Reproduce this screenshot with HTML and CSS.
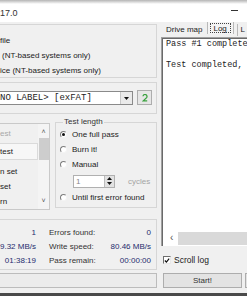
FILE: index.html
```html
<!DOCTYPE html>
<html>
<head>
    <title>Check Flash</title>
    <link rel="stylesheet" href="styles.css">
</head>
<body>
<div class="window">
    <div class="titlebar">
        <span class="title">17.0</span>
        <span class="minimize"></span>
    </div>
    <div class="main">
        <div class="left">
            <div class="group access">
                <div class="option">file</div>
                <div class="option shift">(NT-based systems only)</div>
                <div class="option">ice (NT-based systems only)</div>
            </div>
            <div class="group drive">
                <div class="combo">
                    <span class="combo-text">NO LABEL&gt; [exFAT]</span>
                    <span class="combo-btn">
                        <svg width="5" height="3" viewBox="0 0 5 3"><path d="M0 0H5L2.5 3Z" fill="#111"/></svg>
                    </span>
                </div>
                <div class="refresh">
                    <svg width="6" height="8" viewBox="0 0 6 8">
                        <path d="M1 2.3A2 2 0 1 1 4.6 3.6L1.2 6.9H5.2" fill="none" stroke="#3aa23f" stroke-width="1.3"/>
                    </svg>
                </div>
            </div>
            <div class="test-row">
                <div class="listbox">
                    <ul class="items">
                        <li class="disabled">est</li>
                        <li class="selected">test</li>
                        <li class="gap">n set</li>
                        <li>set</li>
                        <li>rn</li>
                    </ul>
                    <div class="vscroll">
                        <span class="arrow">&#708;</span>
                        <span class="thumb"></span>
                        <span class="arrow down">&#709;</span>
                    </div>
                </div>
                <div class="group length">
                    <span class="legend">Test length</span>
                    <div class="radio-line"><span class="radio on"></span>One full pass</div>
                    <div class="radio-line"><span class="radio"></span>Burn it!</div>
                    <div class="radio-line"><span class="radio"></span>Manual</div>
                    <div class="spin-line">
                        <div class="spin">
                            <span class="spin-value">1</span>
                            <span class="spin-btns">
                                <svg width="5" height="3" viewBox="0 0 5 3"><path d="M0 3H5L2.5 0Z" fill="#111"/></svg>
                                <svg width="5" height="3" viewBox="0 0 5 3"><path d="M0 0H5L2.5 3Z" fill="#111"/></svg>
                            </span>
                        </div>
                        <span class="cycles">cycles</span>
                    </div>
                    <div class="radio-line"><span class="radio"></span>Until first error found</div>
                </div>
            </div>
            <div class="group stats">
                <span class="val">1</span><span class="label">Errors found:</span><span class="val">0</span>
                <span class="val">9.32 MB/s</span><span class="label">Write speed:</span><span class="val">80.46 MB/s</span>
                <span class="val">01:38:19</span><span class="label">Pass remain:</span><span class="val">00:00:00</span>
            </div>
            <div class="progress"></div>
        </div>
        <div class="right">
            <div class="tabs">
                <span class="tab">Drive map</span>
                <span class="tab active"><span class="focus">Log</span></span>
                <span class="tab next">L</span>
            </div>
            <div class="log">
                <pre class="log-text">Pass #1 completed, no errors found.

Test completed, no errors found.</pre>
                <div class="hscroll">
                    <span class="arrow">&lsaquo;</span>
                    <span class="track"></span>
                </div>
            </div>
            <div class="check-line">
                <span class="checkbox">
                    <svg width="7" height="7" viewBox="0 0 7 7"><path d="M1 3.5L2.8 5.3L6 1.2" fill="none" stroke="#111" stroke-width="1.4"/></svg>
                </span>
                Scroll log
            </div>
            <div class="buttons">
                <div class="btn">Start!</div>
                <div class="btn"></div>
            </div>
        </div>
    </div>
    <div class="taskbar"></div>
</div>
</body>
</html>
```

FILE: styles.css
```css
* {
	box-sizing: border-box;
}

body {
	margin: 0;
	width: 247px;
	height: 296px;
	overflow: hidden;
	background-color: #f0f0f0;
	font-family: "Liberation Sans", Arial, sans-serif;
	font-size: 8px;
	color: #222;
}

.window {
	display: grid;
	grid-template-rows: 22px 270px 4px;
	height: 296px;
}

/* title bar */
.titlebar {
	display: flex;
	align-items: center;
	justify-content: space-between;
	padding: 4px 9px 0 0;
	background: linear-gradient(#b4b4b4, #fff 4px);
	font-size: 9px;
	color: #333;
}

.minimize {
	width: 7px;
	height: 1px;
	margin-bottom: 6px;
	background-color: #333;
}

.main {
	display: grid;
	grid-template-columns: 157px 120px;
	column-gap: 4px;
	overflow: hidden;
}

/* left side */
.left {
	display: flex;
	flex-direction: column;
}

.group {
	border: 1px solid #d6d6d6;
	border-left: none;
}

.access {
	margin-top: 2px;
	height: 54px;
	padding-top: 8px;
}

.option {
	line-height: 15px;
	white-space: nowrap;
}

.option.shift {
	padding-left: 2px;
}

.drive {
	margin-top: 4px;
	height: 32px;
	padding-top: 7px;
	display: flex;
	align-items: flex-start;
	gap: 4px;
}

.combo {
	margin-top: 1px;
	width: 133px;
	height: 14px;
	display: flex;
	justify-content: space-between;
	background-color: #fff;
	border: 1px solid #8a8a8a;
	border-left: none;
}

.combo-text {
	font-family: "Liberation Mono", "Courier New", monospace;
	font-size: 9px;
	line-height: 12px;
	white-space: nowrap;
}

.combo-btn {
	width: 12px;
	display: flex;
	align-items: center;
	justify-content: center;
	background-color: #eaeaea;
	border-left: 1px solid #c8c8c8;
}

.refresh {
	width: 15px;
	height: 15px;
	display: flex;
	align-items: center;
	justify-content: center;
	background-color: #e6e6e6;
	border: 1px solid #adadad;
}

.test-row {
	margin-top: 6px;
	height: 90px;
	display: flex;
	gap: 5px;
}

.listbox {
	margin-top: 3px;
	width: 50px;
	height: 87px;
	display: flex;
	border: 1px solid #c9c9c9;
	border-left: none;
}

.items {
	list-style: none;
	margin: 0;
	padding: 1px 0 0 0;
	flex: 1;
	overflow: hidden;
}

.items li {
	height: 15px;
	line-height: 15px;
	white-space: nowrap;
}

.items li.disabled {
	height: 18px;
	line-height: 17px;
	color: #a8a8a8;
}

.items li.selected {
	height: 17px;
	background-color: #f7f7f7;
	border: 1px solid #dadada;
	border-left: none;
	line-height: 15px;
}

.items li.gap {
	margin-top: 4px;
}

.vscroll {
	width: 11px;
	display: flex;
	flex-direction: column;
	align-items: center;
	background-color: #f4f4f4;
}

.vscroll .arrow {
	height: 14px;
	line-height: 16px;
	font-size: 7px;
	color: #555;
}

.vscroll .thumb {
	width: 10px;
	height: 22px;
	background-color: #cdcdcd;
}

.vscroll .down {
	margin-top: auto;
	line-height: 12px;
}

.length {
	margin-top: 2px;
	width: 102px;
	height: 86px;
	border-left: 1px solid #d6d6d6;
	padding: 0 0 0 4px;
}

.legend {
	display: table;
	margin: -6px 0 0 3px;
	padding: 0 1px;
	line-height: 10px;
	background-color: #f0f0f0;
	color: #333;
}

.radio-line {
	display: flex;
	align-items: center;
	gap: 5px;
	height: 15px;
	white-space: nowrap;
}

.radio {
	width: 7px;
	height: 7px;
	border-radius: 50%;
	background-color: #fff;
	border: 1px solid;
	border-color: #7d7d7d #f4f4f4 #f4f4f4 #7d7d7d;
	display: flex;
	align-items: center;
	justify-content: center;
}

.radio.on::after {
	content: "";
	width: 3px;
	height: 3px;
	border-radius: 50%;
	background-color: #111;
}

.spin-line {
	display: flex;
	align-items: center;
	height: 18px;
	padding-left: 13px;
	gap: 13px;
}

.spin {
	width: 42px;
	height: 13px;
	display: flex;
	justify-content: space-between;
	background-color: #fff;
	border: 1px solid #b0b0b0;
}

.spin-value {
	padding-left: 2px;
	line-height: 11px;
	color: #888;
}

.spin-btns {
	width: 10px;
	display: flex;
	flex-direction: column;
	align-items: center;
	justify-content: space-around;
	background-color: #e2e2e2;
	border-left: 1px solid #bdbdbd;
}

.spin-btns svg {
	display: block;
}

.cycles {
	color: #a4a4a4;
}

.stats {
	margin-top: 9px;
	height: 51px;
	padding: 5px 5px 0 0;
	display: grid;
	grid-template-columns: 36px 1fr auto;
	grid-auto-rows: 14px;
	align-items: center;
}

.stats .label {
	padding-left: 13px;
	color: #333;
}

.stats .val {
	text-align: right;
	color: #1f2c6e;
	white-space: nowrap;
}

.progress {
	margin-top: 3px;
	height: 15px;
	background-color: #ececec;
	border: 1px solid #bcbcbc;
	border-left: none;
}

/* right side */
.right {
	display: flex;
	flex-direction: column;
}

.tabs {
	height: 15px;
	display: flex;
	align-items: flex-start;
	padding-left: 5px;
}

.tab {
	line-height: 12px;
	margin-top: 2px;
	white-space: nowrap;
	flex-shrink: 0;
}

.tab.active {
	margin: -1px 0 0 5px;
	width: 27px;
	height: 13px;
	padding: 1px 2px;
	border: 1px solid #b8b8b8;
	border-bottom: none;
	background-color: #f4f4f4;
}

.focus {
	display: block;
	height: 10px;
	line-height: 9px;
	padding-left: 2px;
	border: 1px dotted #444;
}

.tab.next {
	margin-left: 3px;
	padding-left: 2px;
	border-left: 1px solid #b8b8b8;
}

.log {
	height: 209px;
	display: flex;
	flex-direction: column;
	background-color: #fff;
	border-top: 1px solid #a0a0a0;
	border-left: 1px solid #a0a0a0;
	box-shadow: inset 1px 1px 0 #6a6a6a;
}

.log-text {
	flex: 1;
	margin: 0;
	padding: 1px 0 0 4px;
	font-family: "Liberation Mono", "Courier New", monospace;
	font-size: 8.5px;
	line-height: 10.5px;
	color: #222;
	overflow: hidden;
}

.hscroll {
	height: 13px;
	display: flex;
	align-items: stretch;
	margin-left: 2px;
	margin-bottom: 1px;
}

.hscroll .arrow {
	width: 14px;
	padding-left: 6px;
	line-height: 12px;
	font-size: 10px;
	color: #555;
}

.hscroll .track {
	flex: 1;
	background-color: #d9d9d9;
}

.check-line {
	height: 24px;
	display: flex;
	align-items: center;
	gap: 3px;
	padding: 4px 0 0 2px;
	white-space: nowrap;
	font-size: 8.5px;
}

.checkbox {
	width: 8px;
	height: 8px;
	display: flex;
	align-items: center;
	justify-content: center;
	background-color: #fff;
	border: 1px solid;
	border-color: #6f6f6f #e8e8e8 #e8e8e8 #6f6f6f;
}

.buttons {
	margin-top: 3px;
	display: flex;
	gap: 3px;
	padding-left: 2px;
}

.btn {
	flex-shrink: 0;
	width: 79px;
	height: 15px;
	line-height: 13px;
	text-align: center;
	background-color: #e3e3e3;
	border: 1px solid #adadad;
	color: #333;
}

.taskbar {
	margin-top: 1px;
	background-color: #4a4a4a;
}
```
